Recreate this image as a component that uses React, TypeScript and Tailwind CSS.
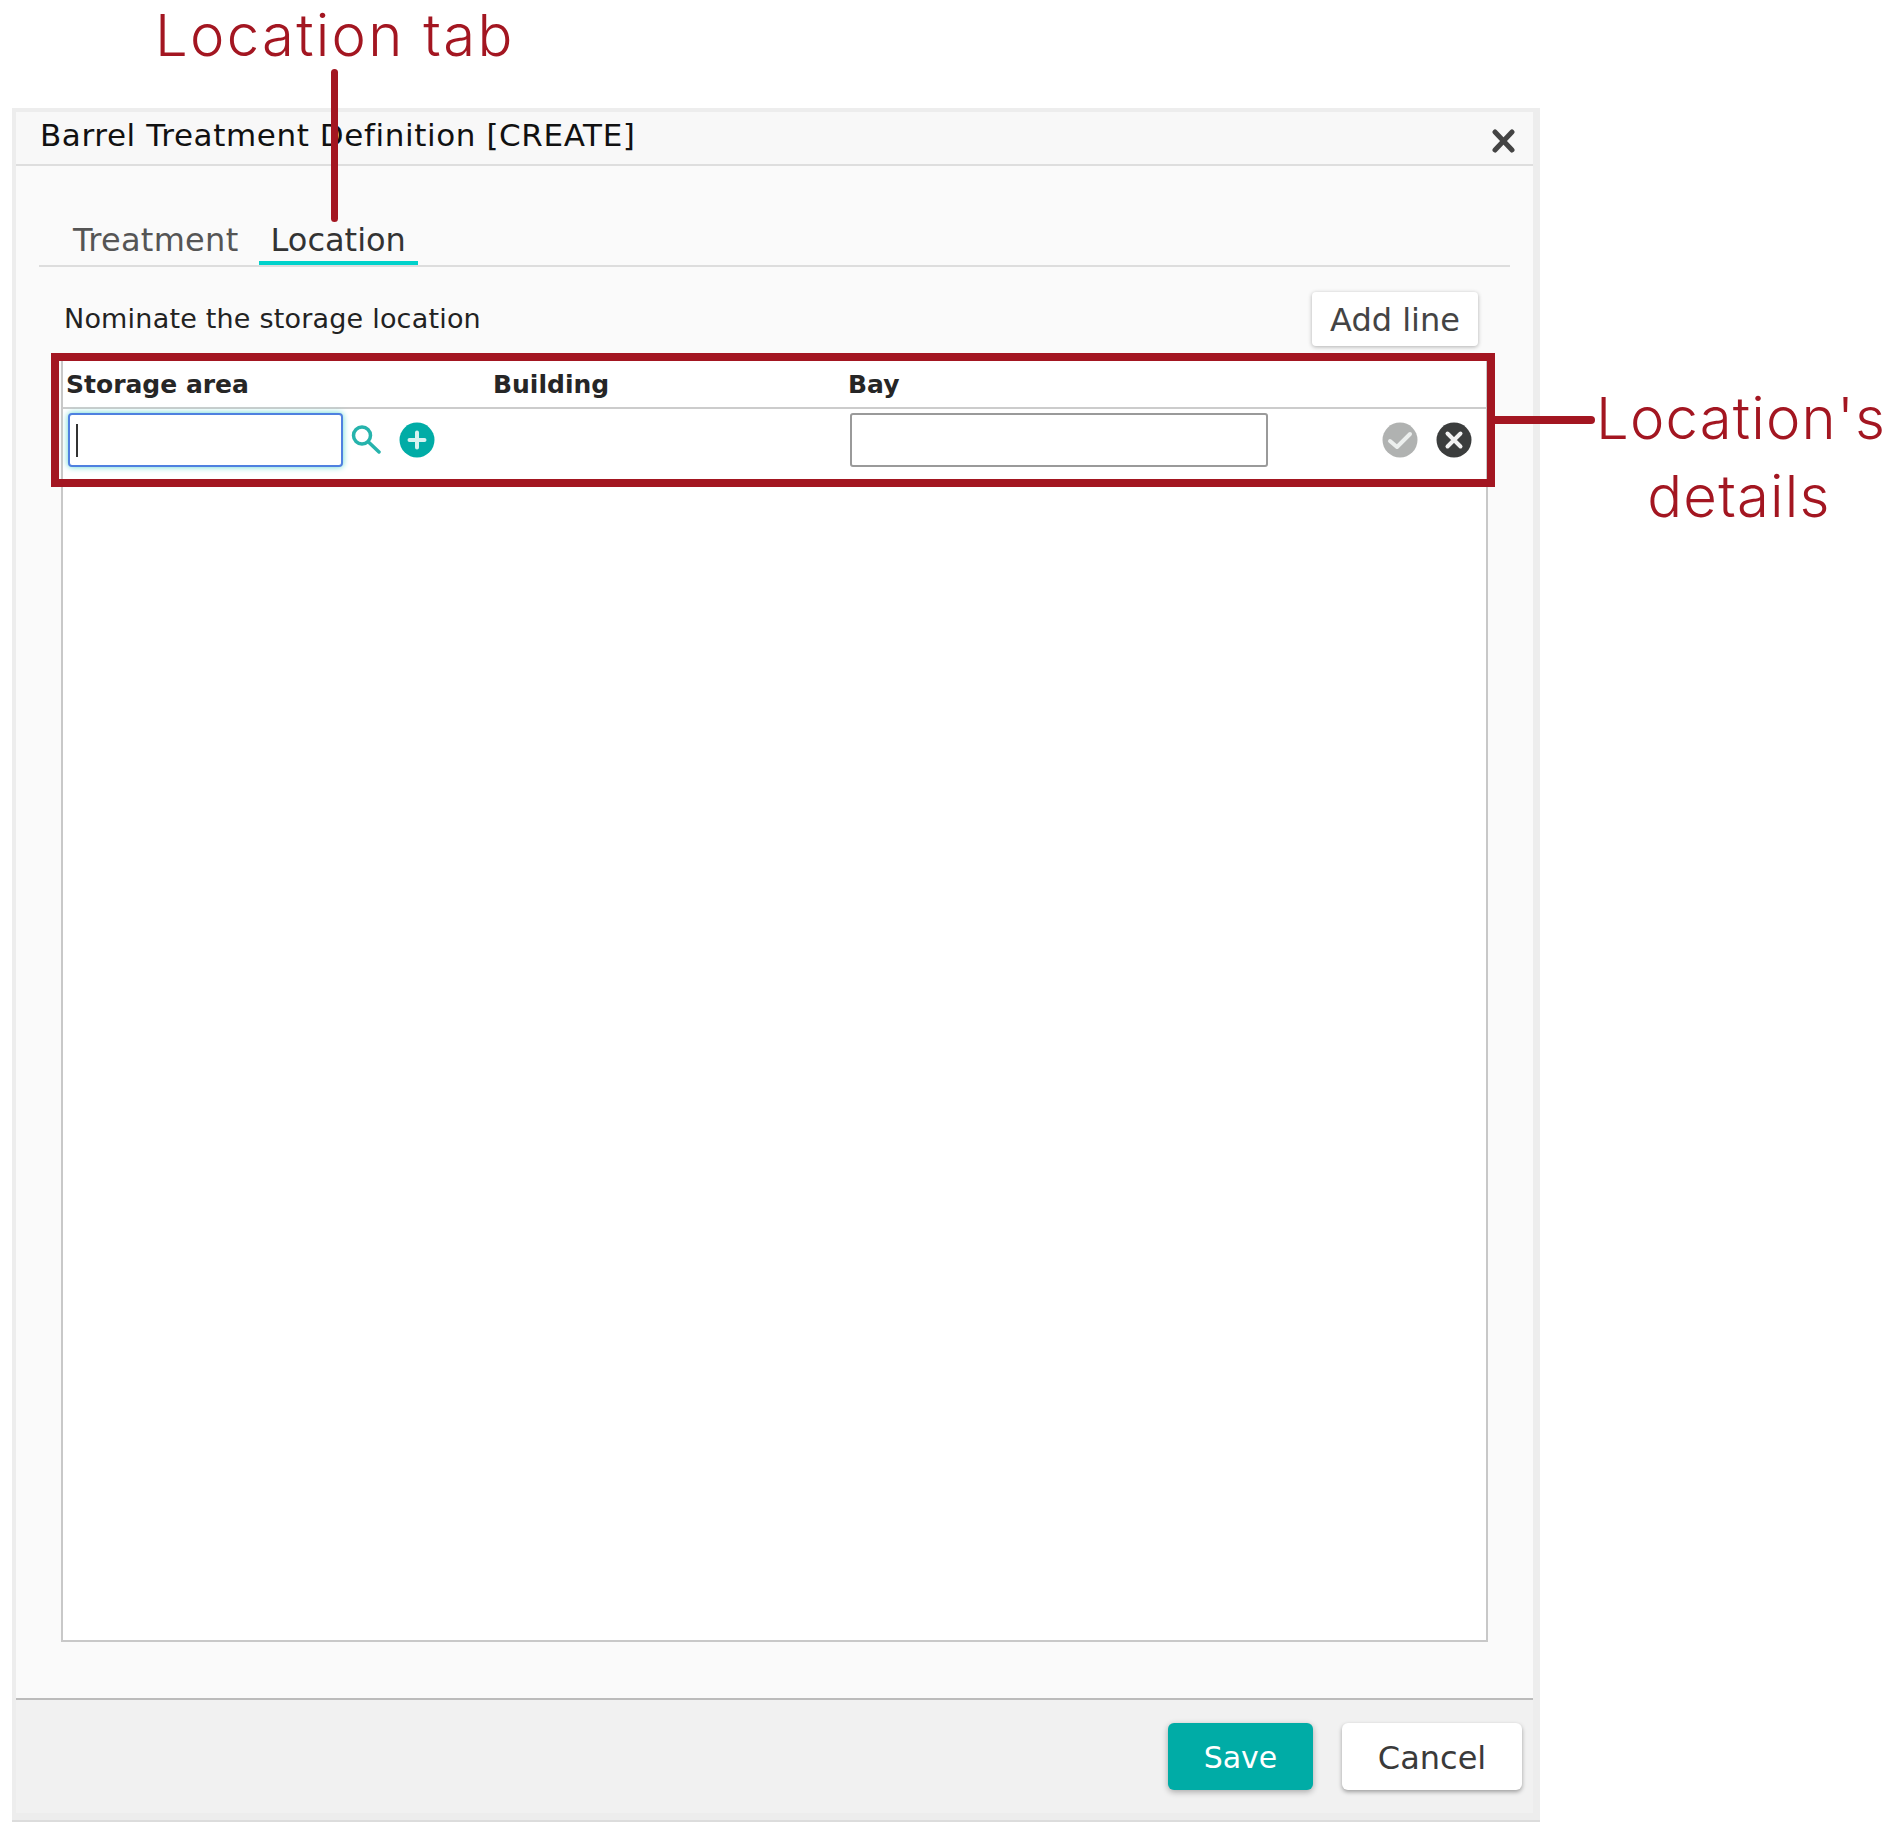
import React from "react";

const font = { fontFamily: "'DejaVu Sans', Inter, sans-serif" };
const accentFont = { fontFamily: "Inter, 'Liberation Sans', sans-serif" };

function SearchIcon() {
  return (
    <svg width="30" height="30" viewBox="0 0 30 30" fill="none" stroke="#26b3ac" strokeWidth="3.5" strokeLinecap="round">
      <circle cx="11" cy="10.5" r="8.5" />
      <line x1="18" y1="17.5" x2="28" y2="27" />
    </svg>
  );
}

function CircleIcon({ color, children }: { color: string; children: React.ReactNode }) {
  return (
    <svg width="36" height="36" viewBox="0 0 36 36" fill="none">
      <circle cx="18" cy="18" r="17.5" fill={color} />
      {children}
    </svg>
  );
}

export default function App() {
  return (
    <div className="relative w-[1904px] h-[1837px] bg-white pt-[108px] pl-[12px] overflow-hidden" style={font}>
      <div className="flex flex-col w-[1528px] h-[1712px] bg-[#ededed] border-t-4 border-l-4 border-r-[7px] border-b-[7px] border-[#ededed] shadow-[0_2px_0_#dcdcdc]">
        {/* Title bar */}
        <div className="flex items-center justify-between h-[54px] shrink-0 bg-[#f8f8f8] border-b-2 border-[#dedede] pl-[24px] pr-[18px]">
          <h1 className="text-[31px] leading-[46px] mb-[6px] font-normal tracking-[0.6px] text-[#111] whitespace-nowrap">Barrel Treatment Definition [CREATE]</h1>
          <svg width="23" height="24" viewBox="0 0 23 24" fill="none" stroke="#444" strokeWidth="5" strokeLinecap="round" className="mt-[6px]">
            <line x1="3" y1="3" x2="20" y2="21" />
            <line x1="20" y1="3" x2="3" y2="21" />
          </svg>
        </div>

        {/* Body */}
        <div className="flex flex-col flex-1 min-h-0 bg-[#fafafa] px-[23px]">
          <div className="flex items-end gap-[8px] h-[101px] shrink-0 pl-[22px] border-b-2 border-[#dddddd]">
            <div className="h-[50px] px-[12px] pt-[2px] text-[32px] leading-[46px] tracking-[0.3px] text-[#555]">Treatment</div>
            <div className="h-[50px] px-[12px] pt-[2px] text-[32px] leading-[46px] text-[#333] border-b-4 border-[#00d2cb]">Location</div>
          </div>

          <div className="flex items-center justify-between mt-[25px] pl-[25px] pr-[32px] shrink-0">
            <span className="text-[27px] leading-[36px] tracking-[0.2px] text-[#222]">Nominate the storage location</span>
            <button className="w-[166px] h-[54px] pt-[1px] rounded-[4px] bg-white text-[32px] text-[#444] shadow-[0_1px_4px_rgba(0,0,0,0.3)]">Add line</button>
          </div>

          {/* Table */}
          <div className="flex flex-col flex-1 min-h-0 mt-[13px] mb-[56px] ml-[22px] mr-[22px] bg-white border-2 border-[#c8c8c8]">
            <div className="grid grid-cols-[427px_355px_1fr] items-center h-[48px] pt-[2px] pl-[3px] shrink-0 border-b-2 border-[#cccccc] text-[25px] font-bold text-[#262626]">
              <span>Storage area</span>
              <span>Building</span>
              <span>Bay</span>
            </div>
            <div className="grid grid-cols-[427px_355px_1fr] items-center pt-[4px] pl-[3px]">
              <div className="flex items-center pl-[2px]">
                <div className="flex items-center w-[275px] h-[54px] rounded-[4px] bg-white border-2 border-[#4f80e0] pl-[6px] shadow-[0_0_6px_#5fd6d0]">
                  <div className="w-[2px] h-[33px] bg-[#333]" />
                </div>
                <span className="ml-[8px] flex">
                  <SearchIcon />
                </span>
                <span className="ml-[18px] flex">
                  <CircleIcon color="#00aca6">
                    <path d="M18 10.5V25.5M10.5 18H25.5" stroke="#d6f2f0" strokeWidth="4" strokeLinecap="round" />
                  </CircleIcon>
                </span>
              </div>
              <div />
              <div className="flex items-center justify-between pl-[2px] pr-[14px]">
                <div className="w-[418px] h-[54px] rounded-[3px] bg-white border-2 border-[#9a9a9a]" />
                <div className="flex items-center gap-[18px]">
                  <CircleIcon color="#b0b2b1">
                    <path d="M8 19L15 25L28 12" stroke="#ecefee" strokeWidth="4" strokeLinecap="round" strokeLinejoin="round" />
                  </CircleIcon>
                  <CircleIcon color="#3b3d3d">
                    <path d="M11.5 11.5L24.5 24.5M24.5 11.5L11.5 24.5" stroke="#f2f2f2" strokeWidth="4" strokeLinecap="round" />
                  </CircleIcon>
                </div>
              </div>
            </div>
          </div>
        </div>

        {/* Footer */}
        <div className="flex justify-end gap-[29px] h-[115px] shrink-0 bg-[#f1f1f1] border-t-2 border-[#bbbbbb] pt-[23px] pr-[11px]">
          <button className="w-[145px] h-[67px] pt-[2px] rounded-[6px] bg-[#00aca6] text-white text-[30px] shadow-[0_2px_6px_rgba(0,0,0,0.3)]">Save</button>
          <button className="w-[180px] h-[67px] pt-[2px] rounded-[6px] bg-white text-[#3a3a3a] text-[32px] shadow-[0_2px_4px_rgba(0,0,0,0.35)]">Cancel</button>
        </div>
      </div>

      {/* Annotations */}
      <div className="absolute left-[155px] top-[-1px] text-[58px] leading-[72px] font-light tracking-[2.3px] text-[#a31621] whitespace-nowrap" style={accentFont}>Location tab</div>
      <div className="absolute left-[331px] top-[69px] w-[7px] h-[153px] rounded-full bg-[#a31621]" />
      <div className="absolute left-[51px] top-[353px] w-[1444px] h-[134px] border-8 border-[#a31621]" />
      <div className="absolute left-[1495px] top-[416px] w-[100px] h-[8px] rounded-r-full bg-[#a31621]" />
      <div className="absolute left-[1596px] top-[379px] w-[286px] text-center text-[58px] leading-[78px] font-light tracking-[1.2px] text-[#a31621]" style={accentFont}>
        Location's
        <br />
        details
      </div>
    </div>
  );
}
